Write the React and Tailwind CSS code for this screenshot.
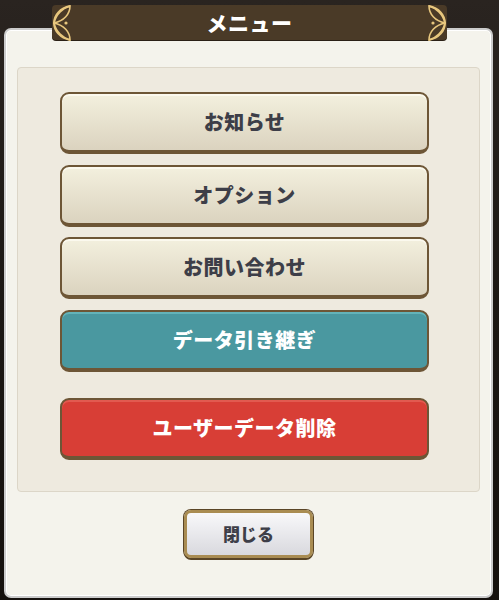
import React from "react";

const font = { fontFamily: '"Noto Sans CJK JP", "Noto Sans", sans-serif' };

function Leaf({ flip }) {
  return (
    <svg
      width="20"
      height="36"
      viewBox="0 0 20 36"
      className={flip ? "-scale-x-100" : ""}
      fill="none"
    >
      <path d="M18 1 C8 3 2 10 2 18 C2 26 8 33 18 35" stroke="#e8c77e" strokeWidth="1.8" />
      <path d="M2 18 C4 9 11 3 18 1 C18 9 12 16 2 18 Z" stroke="#e8c77e" strokeWidth="1.6" />
      <path d="M2 18 C4 27 11 33 18 35 C18 27 12 20 2 18 Z" stroke="#e8c77e" strokeWidth="1.6" />
      <circle cx="14" cy="18" r="1.6" fill="#e8c77e" />
    </svg>
  );
}

function MenuButton({ label, tone = "cream", className = "" }) {
  const tones = {
    cream:
      "bg-gradient-to-b from-[#f3f0de] to-[#dbd3bf] text-[#3d3e48] shadow-[inset_0_2px_0_#fbf9ee]",
    teal: "bg-[#4a98a0] text-white shadow-[inset_0_2px_0_#63b3b9]",
    red: "bg-[#d83e36] text-white shadow-[inset_0_2px_0_#e25a50]",
  };
  return (
    <button
      className={`h-[62px] w-full rounded-[9px] border-2 border-b-[4px] border-[#6d5636] text-[20px] font-black tracking-wide ${tones[tone]} ${className}`}
      style={font}
    >
      {label}
    </button>
  );
}

export default function App() {
  return (
    <div className="relative h-[600px] w-[499px] overflow-hidden bg-gradient-to-b from-[#2a2420] via-[#1c1815] to-[#15110e]">
      {/* Title bar */}
      <div className="absolute left-[52px] top-[5px] z-10 flex h-[35px] w-[395px] items-center justify-between rounded-[4px] bg-[#4a3a27] shadow-[0_1px_0_#2a2016]">
        <Leaf />
        <span className="text-[21px] font-black tracking-wide text-white" style={font}>
          メニュー
        </span>
        <Leaf flip />
      </div>

      {/* Panel */}
      <div className="ml-[4px] mt-[28px] flex h-[570px] w-[489px] flex-col rounded-[7px] border-2 border-[#cbcbcb] bg-[#f4f3ec] px-[11px] pt-[37px] shadow-[inset_0_0_0_1px_#ffffff]">
        <div className="flex h-[425px] flex-col rounded-[4px] border border-[#dcd6c8] bg-[#eeeadf] pl-[42px] pr-[50px] pt-[24px]">
          <div className="flex flex-col gap-[10.5px]">
            <MenuButton label="お知らせ" />
            <MenuButton label="オプション" />
            <MenuButton label="お問い合わせ" />
            <MenuButton label="データ引き継ぎ" tone="teal" />
          </div>
          <MenuButton label="ユーザーデータ削除" tone="red" className="mt-[26px]" />
        </div>

        <div className="flex justify-center pt-[18px]">
          <button
            className="h-[48px] w-[129px] rounded-[7px] border-[3px] border-[#a98c52] bg-gradient-to-b from-[#f8f8fa] to-[#d9d9de] text-[17px] font-black text-[#3d3e48] shadow-[0_0_0_1px_#5a4526,0_2px_0_#5a4526]"
            style={font}
          >
            閉じる
          </button>
        </div>
      </div>
    </div>
  );
}
